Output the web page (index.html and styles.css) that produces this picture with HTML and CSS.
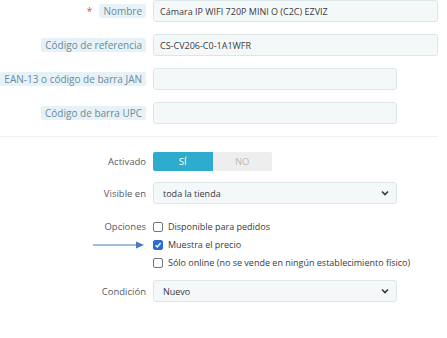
FILE: index.html
```html
<!DOCTYPE html>
<html lang="es">
<head>
    <meta charset="UTF-8">
    <title>Producto</title>
    <link rel="stylesheet" href="styles.css">
</head>
<body>
    <div class="form">
        <div class="row">
            <div class="label-cell"><span class="req">*</span><span class="tag">Nombre</span></div>
            <div class="input wide">Cámara IP WIFI 720P MINI O (C2C) EZVIZ</div>
        </div>
        <div class="row">
            <div class="label-cell"><span class="tag">Código de referencia</span></div>
            <div class="input wide">CS-CV206-C0-1A1WFR</div>
        </div>
        <div class="row">
            <div class="label-cell"><span class="tag">EAN-13 o código de barra JAN</span></div>
            <div class="input"></div>
        </div>
        <div class="row">
            <div class="label-cell"><span class="tag">Código de barra UPC</span></div>
            <div class="input"></div>
        </div>

        <hr class="sep">

        <div class="row row-switch">
            <div class="label-cell plain">Activado</div>
            <div class="switch">
                <span class="on">SÍ</span>
                <span class="off">NO</span>
            </div>
        </div>
        <div class="row row-visible">
            <div class="label-cell plain">Visible en</div>
            <div class="input select">
                <span>toda la tienda</span>
                <svg width="8" height="6" viewBox="0 0 8 6"><path d="M1 1.5 L4 4.5 L7 1.5" fill="none" stroke="#363a41" stroke-width="1.6"/></svg>
            </div>
        </div>

        <div class="options">
            <div class="label-cell plain">Opciones</div>
            <label class="check"><span class="box"></span>Disponible para pedidos</label>

            <div class="label-cell arrow-cell">
                <svg width="52" height="8" viewBox="0 0 52 8"><line x1="0" y1="4" x2="44" y2="4" stroke="#4a78c2" stroke-width="1.2"/><path d="M43 0.5 L51 4 L43 7.5 Z" fill="#4a78c2"/></svg>
            </div>
            <label class="check"><span class="box checked"><svg width="8" height="8" viewBox="0 0 8 8"><path d="M1.5 4.2 L3.3 6 L6.6 2" fill="none" stroke="#fff" stroke-width="1.4"/></svg></span>Muestra el precio</label>

            <div class="label-cell"></div>
            <label class="check"><span class="box"></span>Sólo online (no se vende en ningún establecimiento físico)</label>
        </div>

        <div class="row row-cond">
            <div class="label-cell plain">Condición</div>
            <div class="input select">
                <span>Nuevo</span>
                <svg width="8" height="6" viewBox="0 0 8 6"><path d="M1 1.5 L4 4.5 L7 1.5" fill="none" stroke="#363a41" stroke-width="1.6"/></svg>
            </div>
        </div>
    </div>
</body>
</html>
```

FILE: styles.css
```css
body {
    margin: 0;
    background-color: #fff;
    font-family: 'Open Sans', sans-serif;
    font-size: 9px;
    color: #363a41;
}
.form {
    width: 438px;
}
.row {
    display: grid;
    grid-template-columns: 146px 1fr;
    column-gap: 7px;
    align-items: center;
    margin-bottom: 12px;
}
.label-cell {
    text-align: right;
    color: #6c868e;
}
.label-cell.plain {
    color: #555a5f;
    font-size: 9.5px;
}
.req {
    color: #e84c4c;
    margin-right: 7px;
    font-size: 10px;
}
.tag {
    display: inline-block;
    background-color: #e6f2f8;
    color: #6b8b97;
    font-size: 10px;
    padding: 1px 4px;
    line-height: 12px;
    border-radius: 2px;
}
.input {
    box-sizing: border-box;
    height: 22px;
    width: 244px;
    background-color: #f5f8f9;
    border: 1px solid #dbe6e9;
    border-radius: 3px;
    padding: 0 6px;
    display: flex;
    align-items: center;
    white-space: nowrap;
}
.input.wide {
    width: 285px;
}
.select {
    justify-content: space-between;
    padding: 0 7px 0 9px;
}
.sep {
    border: none;
    border-top: 1px solid #f0f1f2;
    margin: 1px 0 15px;
}
.row-switch {
    margin-bottom: 11px;
}
.switch {
    display: flex;
    width: 119px;
    height: 19px;
}
.switch span {
    flex: 1;
    display: flex;
    align-items: center;
    justify-content: center;
    font-size: 9.5px;
}
.switch .on {
    background-color: #2eacce;
    color: #fff;
    border-radius: 2px 0 0 2px;
}
.switch .off {
    background-color: #eeeeee;
    color: #bbbbbb;
    border-radius: 0 2px 2px 0;
}
.row-visible {
    margin-bottom: 16px;
}
.options {
    display: grid;
    grid-template-columns: 146px 1fr;
    column-gap: 7px;
    row-gap: 5px;
    align-items: center;
    margin-bottom: 11px;
}
.arrow-cell {
    display: flex;
    justify-content: flex-end;
    padding-right: 1px;
}
.arrow-cell svg {
    display: block;
}
.check {
    display: flex;
    align-items: center;
    height: 13px;
    color: #363a41;
    font-size: 9px;
    white-space: nowrap;
}
.box {
    box-sizing: border-box;
    width: 10px;
    height: 10px;
    border: 1px solid #6c7a80;
    border-radius: 2px;
    margin-right: 5px;
    display: flex;
    align-items: center;
    justify-content: center;
    flex-shrink: 0;
}
.box.checked {
    background-color: #2a6fd1;
    border-color: #2a6fd1;
}
```
